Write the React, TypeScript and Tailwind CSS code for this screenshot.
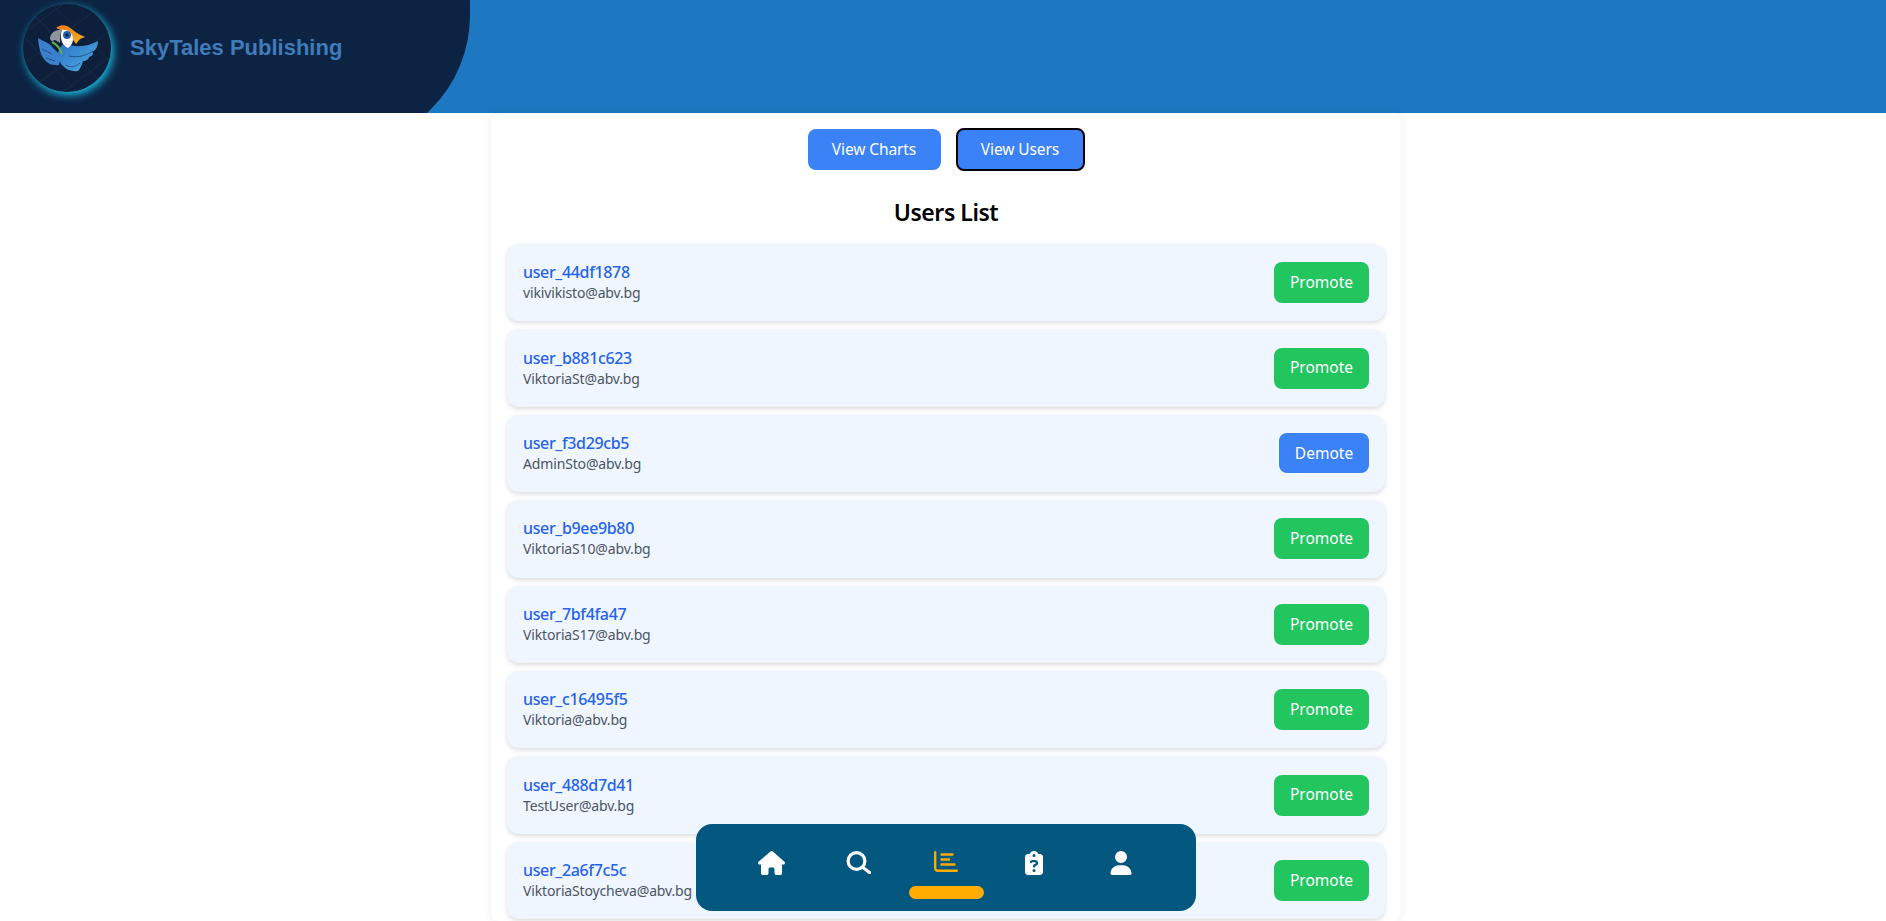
import { FaUser, FaHouse, FaClipboardQuestion } from "react-icons/fa6";

const users = [
  ["user_44df1878", "vikivikisto@abv.bg", "Promote"],
  ["user_b881c623", "ViktoriaSt@abv.bg", "Promote"],
  ["user_f3d29cb5", "AdminSto@abv.bg", "Demote"],
  ["user_b9ee9b80", "ViktoriaS10@abv.bg", "Promote"],
  ["user_7bf4fa47", "ViktoriaS17@abv.bg", "Promote"],
  ["user_c16495f5", "Viktoria@abv.bg", "Promote"],
  ["user_488d7d41", "TestUser@abv.bg", "Promote"],
  ["user_2a6f7c5c", "ViktoriaStoycheva@abv.bg", "Promote"],
];

function Logo() {
  return (
    <svg viewBox="0 0 88 88" className="h-[88px] w-[88px] shrink-0 rounded-full bg-[#0d1f3a] shadow-[2px_3px_8px_#1cc4e8]">
      <defs>
        <linearGradient id="wing" x1="0" y1="0" x2="1" y2="1">
          <stop offset="0" stopColor="#2b6fc0" />
          <stop offset="1" stopColor="#4fb0e8" />
        </linearGradient>
        <linearGradient id="crest" x1="0" y1="0" x2="1" y2="1">
          <stop offset="0" stopColor="#f0761a" />
          <stop offset="1" stopColor="#f7b21c" />
        </linearGradient>
      </defs>
      <g stroke="#1d3554" strokeWidth="0.6" fill="none">
        <path d="M0 30 L40 0 M0 60 L70 8 M14 80 L88 26 M40 88 L88 52 M10 10 L80 80 M30 2 L88 58 M2 34 L54 88" />
      </g>
      <path d="M15 34 C19 37 26 38 30 44 L38 52 L36 61 C29 62 24 59 21 55 C17 50 16 43 15 34 Z" fill="#3b80cc" />
      <path d="M19 45 L29 50 M23 54 L32 57" stroke="#0d1f3a" strokeWidth="0.5" fill="none" />
      <path d="M42 39 C52 44 64 43 75 37 C75 42 73 46 69 48 C71 49 70 52 66 53 C66 55 63 57 60 57 C59 61 57 65 55 67 C48 68 41 65 37 58 C33 51 35 43 42 39 Z" fill="url(#wing)" />
      <path d="M43 61 C48 64 52 63 57 59 M46 52 C54 54 62 52 70 47" stroke="#0d1f3a" strokeWidth="0.5" fill="none" />
      <path d="M29 38 C33 40 37 44 39 50" stroke="#62b14a" strokeWidth="2" fill="none" />
      <path d="M33 24 C36 21 41 20 46 23 C50 26 56 31 62 33 L57 35 L53 40 C49 33 41 27 33 24 Z" fill="url(#crest)" />
      <path d="M39 26 C45 25 50 30 50 35 C50 38 49 41 45 44 C41 42 38 38 38 33 C38 30 38 28 39 26 Z" fill="#ffffff" />
      <circle cx="44" cy="31" r="4" fill="#2361ad" />
      <circle cx="44" cy="31" r="1.6" fill="#0d1f3a" />
      <path d="M39 26 C33 25 27 29 27 35 C28 37 30 38 31 36 C33 36 35 38 37 39 C37 34 37 30 39 26 Z" fill="#8d949c" />
    </svg>
  );
}

function Chart() {
  return (
    <svg viewBox="0 0 24 21" className="h-[21px] w-[24px]" fill="none" stroke="#ffab00" strokeLinecap="round" strokeWidth="2.4">
      <path d="M1.2 1.2 V17 Q1.2 19.8 4 19.8 H22.8" />
      <path d="M7.5 3.5 H18.5 M7.5 8.5 H15 M7.5 13.5 H20.5" />
    </svg>
  );
}

function Search() {
  return (
    <svg viewBox="0 0 25 23" className="h-[23px] w-[25px]" fill="none" stroke="#ffffff" strokeLinecap="round" strokeWidth="3.2">
      <circle cx="10.5" cy="10" r="8.4" />
      <path d="M17 16.5 L23.5 21.5" />
    </svg>
  );
}

export default function App() {
  return (
    <div className="min-h-screen bg-white font-['Noto_Sans',sans-serif]">
      <header className="h-[113px] overflow-hidden bg-[#1d78c1]">
        <div className="flex h-[148px] w-[470px] items-start gap-[19px] rounded-br-[133px] bg-[#0d2344] pl-[23px] pt-[4px]">
          <Logo />
          <span className="pt-[29px] font-['Liberation_Sans',sans-serif] text-[22px] font-bold leading-[30px] text-[#3f7cba]">SkyTales Publishing</span>
        </div>
      </header>
      <main className="ml-[491px] h-[808px] w-[910px] overflow-hidden rounded-lg bg-white px-4 shadow-[0_0_10px_rgba(0,0,0,0.08)]">
        <div className="flex items-center justify-center gap-[15px] pt-[15px]">
          <button className="h-[41px] w-[133px] rounded-lg bg-[#3b82f6] text-[15.5px] tracking-[-0.1px] text-white">View Charts</button>
          <button className="h-[43px] w-[129px] rounded-lg border-2 border-black bg-[#3b82f6] text-[15.5px] tracking-[-0.1px] text-white">View Users</button>
        </div>
        <h2 className="mt-[23px] text-center text-[23px] font-semibold leading-[36px] tracking-[-0.45px] text-black">Users List</h2>
        <ul className="mt-[14px] flex flex-col gap-[8px]">
          {users.map(([name, email, action]) => (
            <li key={name} className="flex h-[77.4px] items-center justify-between rounded-xl bg-[#eff6ff] px-4 shadow-[0_2px_5px_rgba(0,0,0,0.14)]">
              <div className="pb-[2px]">
                <div className="text-[16px] font-medium leading-[22px] tracking-[-0.35px] text-[#2563eb]">{name}</div>
                <div className="text-[14px] leading-[19px] tracking-[-0.15px] text-[#4b5563]">{email}</div>
              </div>
              <button className={action === "Promote" ? "h-[41px] w-[95px] rounded-lg bg-[#22c55e] text-[15.5px] text-white" : "h-[40px] w-[90px] rounded-lg bg-[#3b82f6] text-[15.5px] text-white"}>{action}</button>
            </li>
          ))}
        </ul>
      </main>
      <nav className="fixed left-[696px] top-[824px] h-[87px] w-[500px] rounded-[16px] bg-[#04587f]">
        <div className="flex justify-center pt-[27px]">
          <span className="flex h-[24px] w-[87.5px] justify-center">
            <FaHouse className="h-[24px] w-[29px] text-white" />
          </span>
          <span className="flex h-[24px] w-[87.5px] justify-center">
            <Search />
          </span>
          <span className="relative flex h-[24px] w-[87.5px] justify-center">
            <Chart />
            <span className="absolute left-[7px] top-[35px] h-[13px] w-[75px] rounded-full bg-[#ffab00]" />
          </span>
          <span className="flex h-[24px] w-[87.5px] justify-center">
            <FaClipboardQuestion className="h-[24px] w-[20px] text-white" />
          </span>
          <span className="flex h-[24px] w-[87.5px] justify-center">
            <FaUser className="h-[24px] w-[22px] text-white" />
          </span>
        </div>
      </nav>
    </div>
  );
}
